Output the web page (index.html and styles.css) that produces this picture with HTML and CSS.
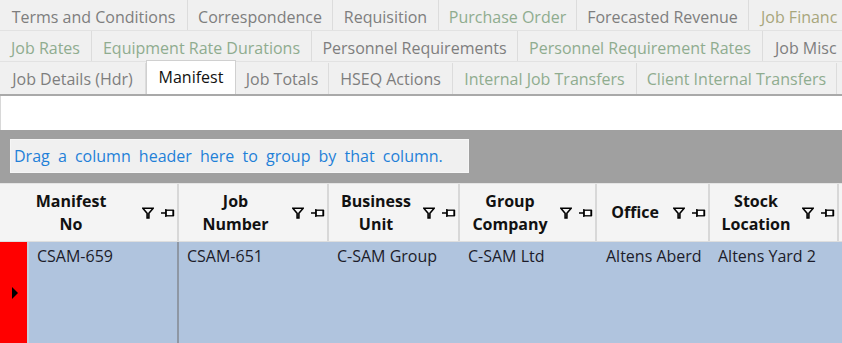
FILE: index.html
```html
<!DOCTYPE html>
<html>
<head>
<meta charset="utf-8">
<link rel="stylesheet" href="styles.css">
</head>
<body>
<div class="page">
  <div class="tabs">
    <div class="tabrow r1">
      <div class="tab gray">Terms and Conditions</div>
      <div class="tab gray">Correspondence</div>
      <div class="tab gray">Requisition</div>
      <div class="tab green">Purchase Order</div>
      <div class="tab gray">Forecasted Revenue</div>
      <div class="tab olive">Job Financ</div>
    </div>
    <div class="tabrow r2">
      <div class="tab green">Job Rates</div>
      <div class="tab green">Equipment Rate Durations</div>
      <div class="tab gray">Personnel Requirements</div>
      <div class="tab green">Personnel Requirement Rates</div>
      <div class="tab gray">Job Misc</div>
    </div>
    <div class="tabrow r3">
      <div class="tab gray">Job Details (Hdr)</div>
      <div class="tab active">Manifest</div>
      <div class="tab gray">Job Totals</div>
      <div class="tab gray">HSEQ Actions</div>
      <div class="tab green">Internal Job Transfers</div>
      <div class="tab green">Client Internal Transfers</div>
      <div class="tab empty"></div>
    </div>
  </div>
  <div class="blank"></div>
  <div class="groupband">
    <div class="groupbox">Drag a column header here to group by that column.</div>
  </div>
  <div class="grid">
    <div class="hdr">
      <div class="hcell c1"><div class="htext">Manifest<br>No</div><div class="hicons"><svg class="funnel" width="12" height="12" viewBox="0 0 12 12"><path d="M0.8 1.2 H11.2 L6.9 6.2 V11 H5.1 V6.2 Z" fill="none" stroke="#000" stroke-width="1.6"/></svg><svg class="pin" width="14" height="10" viewBox="0 0 14 10"><path d="M0 5 H4.5 M4.8 1 V9" stroke="#000" stroke-width="1.3" fill="none"/><rect x="5.2" y="2.2" width="7" height="5.6" fill="#fff" stroke="#000" stroke-width="1.3"/><path d="M12.4 2 V8" stroke="#000" stroke-width="1.6"/></svg></div></div>
      <div class="hcell c2"><div class="htext">Job<br>Number</div><div class="hicons"><svg class="funnel" width="12" height="12" viewBox="0 0 12 12"><path d="M0.8 1.2 H11.2 L6.9 6.2 V11 H5.1 V6.2 Z" fill="none" stroke="#000" stroke-width="1.6"/></svg><svg class="pin" width="14" height="10" viewBox="0 0 14 10"><path d="M0 5 H4.5 M4.8 1 V9" stroke="#000" stroke-width="1.3" fill="none"/><rect x="5.2" y="2.2" width="7" height="5.6" fill="#fff" stroke="#000" stroke-width="1.3"/><path d="M12.4 2 V8" stroke="#000" stroke-width="1.6"/></svg></div></div>
      <div class="hcell c3"><div class="htext">Business<br>Unit</div><div class="hicons"><svg class="funnel" width="12" height="12" viewBox="0 0 12 12"><path d="M0.8 1.2 H11.2 L6.9 6.2 V11 H5.1 V6.2 Z" fill="none" stroke="#000" stroke-width="1.6"/></svg><svg class="pin" width="14" height="10" viewBox="0 0 14 10"><path d="M0 5 H4.5 M4.8 1 V9" stroke="#000" stroke-width="1.3" fill="none"/><rect x="5.2" y="2.2" width="7" height="5.6" fill="#fff" stroke="#000" stroke-width="1.3"/><path d="M12.4 2 V8" stroke="#000" stroke-width="1.6"/></svg></div></div>
      <div class="hcell c4"><div class="htext">Group<br>Company</div><div class="hicons"><svg class="funnel" width="12" height="12" viewBox="0 0 12 12"><path d="M0.8 1.2 H11.2 L6.9 6.2 V11 H5.1 V6.2 Z" fill="none" stroke="#000" stroke-width="1.6"/></svg><svg class="pin" width="14" height="10" viewBox="0 0 14 10"><path d="M0 5 H4.5 M4.8 1 V9" stroke="#000" stroke-width="1.3" fill="none"/><rect x="5.2" y="2.2" width="7" height="5.6" fill="#fff" stroke="#000" stroke-width="1.3"/><path d="M12.4 2 V8" stroke="#000" stroke-width="1.6"/></svg></div></div>
      <div class="hcell c5"><div class="htext">Office</div><div class="hicons"><svg class="funnel" width="12" height="12" viewBox="0 0 12 12"><path d="M0.8 1.2 H11.2 L6.9 6.2 V11 H5.1 V6.2 Z" fill="none" stroke="#000" stroke-width="1.6"/></svg><svg class="pin" width="14" height="10" viewBox="0 0 14 10"><path d="M0 5 H4.5 M4.8 1 V9" stroke="#000" stroke-width="1.3" fill="none"/><rect x="5.2" y="2.2" width="7" height="5.6" fill="#fff" stroke="#000" stroke-width="1.3"/><path d="M12.4 2 V8" stroke="#000" stroke-width="1.6"/></svg></div></div>
      <div class="hcell c6"><div class="htext">Stock<br>Location</div><div class="hicons"><svg class="funnel" width="12" height="12" viewBox="0 0 12 12"><path d="M0.8 1.2 H11.2 L6.9 6.2 V11 H5.1 V6.2 Z" fill="none" stroke="#000" stroke-width="1.6"/></svg><svg class="pin" width="14" height="10" viewBox="0 0 14 10"><path d="M0 5 H4.5 M4.8 1 V9" stroke="#000" stroke-width="1.3" fill="none"/><rect x="5.2" y="2.2" width="7" height="5.6" fill="#fff" stroke="#000" stroke-width="1.3"/><path d="M12.4 2 V8" stroke="#000" stroke-width="1.6"/></svg></div></div>
      <div class="hcell c7"></div>
    </div>
    <div class="row">
      <div class="indicator"><span class="arrow"></span></div>
      <div class="cell c1d">CSAM-659</div>
      <div class="cell c2">CSAM-651</div>
      <div class="cell c3">C-SAM Group</div>
      <div class="cell c4">C-SAM Ltd</div>
      <div class="cell c5">Altens Aberd</div>
      <div class="cell c6">Altens Yard 2</div>
      <div class="cell c7"></div>
    </div>
  </div>
</div>
</body>
</html>
```
FILE: styles.css
```css
* { box-sizing: border-box; }
html, body { margin: 0; padding: 0; }
body {
  width: 842px;
  height: 343px;
  overflow: hidden;
  background: #fff;
  font-family: "Open Sans", "Noto Sans", sans-serif;
  font-size: 16px;
}
.page { width: 842px; display: flex; flex-direction: column; }

/* tabs */
.tabs {
  background: #f0f0f0;
  border-bottom: 2px solid #a9a9a9;
  height: 96px;
  overflow: hidden;
}
.tabrow {
  display: flex;
  flex-wrap: nowrap;
  white-space: nowrap;
  border-bottom: 1px solid #e2e2e2;
}
.r1, .r2 { height: 31px; }
.r3 { height: 32px; border-bottom: none; align-items: flex-end; overflow: visible; }
.tab {
  flex: none;
  display: flex;
  align-items: center;
  justify-content: center;
  border-right: 1px solid #dcdcdc;
  height: 100%;
  overflow: hidden;
}
.r1 .tab, .r2 .tab { padding-top: 3px; }
.r3 .tab { height: 31px; padding-top: 1px; }
.gray { color: #7e7e7e; }
.green { color: #8fac8f; }
.olive { color: #a8a67c; }

.r1 .tab:nth-child(1) { width: 188px; }
.r1 .tab:nth-child(2) { width: 145px; }
.r1 .tab:nth-child(3) { width: 106px; }
.r1 .tab:nth-child(4) { width: 138px; }
.r1 .tab:nth-child(5) { width: 172px; }
.r1 .tab:nth-child(6) { width: 93px; justify-content: flex-start; padding-left: 12px; border-right: none; }

.r2 .tab:nth-child(1) { width: 92px; }
.r2 .tab:nth-child(2) { width: 220px; }
.r2 .tab:nth-child(3) { width: 206px; }
.r2 .tab:nth-child(4) { width: 245px; }
.r2 .tab:nth-child(5) { width: 79px; justify-content: flex-start; padding-left: 12px; border-right: none; }

.r3 .tab:nth-child(1) { width: 146px; }
.r3 .tab:nth-child(2) { width: 90px; }
.r3 .tab:nth-child(3) { width: 93px; }
.r3 .tab:nth-child(4) { width: 124px; }
.r3 .tab:nth-child(5) { width: 184px; }
.r3 .tab:nth-child(6) { width: 200px; }
.r3 .tab:nth-child(7) { width: 5px; border-right: none; }

.r3 .tab.active {
  background: #fff;
  color: #111;
  height: 36px;
  margin-bottom: -2px;
  border: 1px solid #d0d0d0;
  border-bottom: none;
  padding-top: 0;
  padding-bottom: 3px;
  position: relative;
  z-index: 1;
}

/* blank area */
.blank { height: 34px; background: #fff; border-left: 1px solid #d8d8d8; }

/* group band */
.groupband {
  height: 53px;
  background: #a0a0a0;
  padding: 9px 0 0 10px;
}
.groupbox {
  width: 459px;
  height: 34px;
  background: #f0f0f0;
  border: 1px solid #f6f6f6;
  color: #1f80d8;
  font-size: 16px;
  display: flex;
  align-items: center;
  padding-left: 3px;
  white-space: nowrap;
  word-spacing: 4px;
}

/* grid */
.grid { display: flex; flex-direction: column; }
.hdr {
  display: flex;
  height: 59px;
  background: #f4f4f4;
  border-top: 1px solid #e4e4e4;
  border-bottom: 1px solid #dedede;
}
.hcell {
  flex: none;
  display: flex;
  align-items: center;
  border-right: 2px solid #d8d8d8;
  height: 100%;
  padding-right: 2px;
}
.htext {
  flex: 1;
  text-align: center;
  font-weight: 700;
  font-size: 16px;
  line-height: 23px;
  color: #111;
}
.hicons { display: flex; align-items: center; gap: 7px; width: 33px; }
.funnel, .pin { display: block; }

.hdr .c1 { width: 179px; }
.c2 { width: 150px; }
.c3 { width: 131px; }
.c4 { width: 137px; }
.c5 { width: 113px; }
.c6 { width: 129px; }
.c7 { flex: 1; border-right: none; }

.row {
  display: flex;
  height: 101px;
  background: #b0c4de;
}
.indicator {
  flex: none;
  width: 29px;
  background: #ff0000;
  border-right: 2px solid #c6cfdc;
  display: flex;
  align-items: center;
  padding-left: 12px;
}
.arrow {
  width: 0; height: 0;
  border-left: 6px solid #000;
  border-top: 6px solid transparent;
  border-bottom: 6px solid transparent;
}
.cell {
  flex: none;
  padding: 3px 0 0 8px;
  color: #1c1c2a;
  white-space: nowrap;
  overflow: hidden;
  line-height: 22px;
}
.c1d { width: 150px; border-right: 2px solid #8e97a4; }
.row .c5 { padding-left: 9px; }
```
